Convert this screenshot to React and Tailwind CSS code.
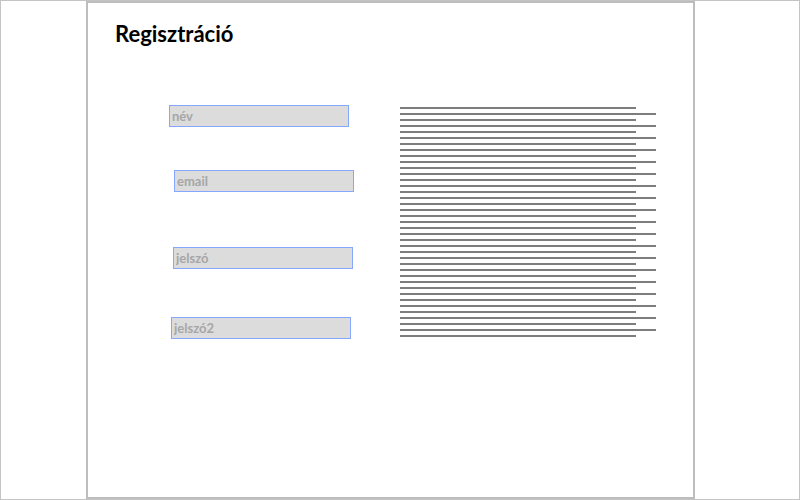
export default function App() {
  const lines = Array.from({ length: 39 }, (_, i) => i);
  const inputCls =
    "block w-[180px] h-[22px] border border-[#86a6ff] bg-[#dcdcdc] px-[2px] text-[13px] font-bold text-[#a6a6a6] placeholder:text-[#a6a6a6] outline-none [font-family:Lato,'Open_Sans',sans-serif]";
  return (
    <div className="w-[800px] h-[500px] border border-[#c4c4c4] bg-white overflow-hidden">
      <div className="ml-[85px] w-[609px] h-[498px] border-2 border-[#bdbdbd] bg-white">
        <div className="pl-[27px] pt-[17px] text-[22px] leading-[28px] font-bold text-black [font-family:Lato,sans-serif]">
          Regisztráció
        </div>
        <div className="flex mt-[57px]">
          <div className="w-[312px] pl-[81px]">
            <input className={inputCls} placeholder="név" readOnly />
            <input className={`${inputCls} mt-[43px] ml-[5px]`} placeholder="email" readOnly />
            <input className={`${inputCls} mt-[55px] ml-[4px]`} placeholder="jelszó" readOnly />
            <input className={`${inputCls} mt-[48px] ml-[2px]`} placeholder="jelszó2" readOnly />
          </div>
          <div className="flex flex-col gap-[4px] pt-[2px]">
            {lines.map((i) => (
              <div
                key={i}
                className={`h-[2px] bg-[#7d7d7d] ${i % 2 === 1 ? "w-[256px]" : "w-[236px]"}`}
              />
            ))}
          </div>
        </div>
      </div>
    </div>
  );
}
